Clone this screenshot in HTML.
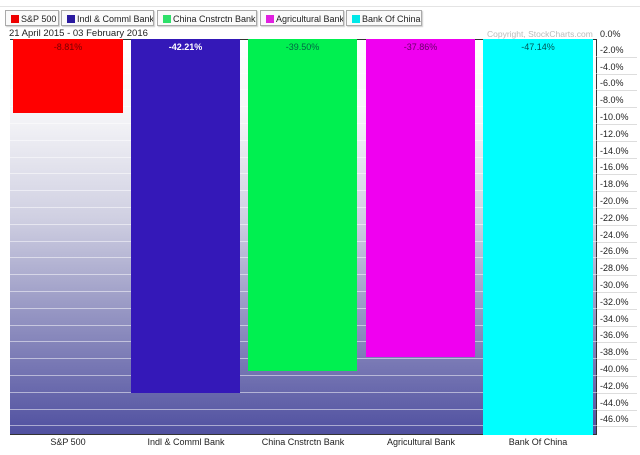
<!DOCTYPE html>
<html><head><style>
body{margin:0;width:640px;height:455px;background:#fff;position:relative;overflow:hidden;font-family:"Liberation Sans",sans-serif;font-size:9px;color:#222}
.a{position:absolute}
.lg{position:absolute;top:10px;height:16px;border:1px solid #aaa;background:#fafafa;box-shadow:1px 1px 1px #ccc;font-size:9px;line-height:16px;padding-left:15px;box-sizing:border-box;white-space:nowrap;overflow:hidden}
.lg i{position:absolute;left:5px;top:4px;width:8px;height:8px}
.bar{position:absolute;top:39px;text-align:center;font-size:9px;padding-top:3px;box-sizing:border-box}
.gl{position:absolute;left:10px;width:587px;height:1px;background:rgba(255,255,255,0.5)}
.yl{position:absolute;left:600px;font-size:9px}
.xl{position:absolute;top:437px;font-size:9px;text-align:center;width:110px;white-space:nowrap}
</style></head><body>
<div class="a" style="left:0;top:0;width:640px;height:6px;border-bottom:1px solid #e4e4e4"></div>
<div class="lg" style="left:5px;width:54px"><i style="background:#e00"></i>S&amp;P 500</div>
<div class="lg" style="left:61px;width:93px"><i style="background:#2a1aa0"></i>Indl &amp; Comml Bank</div>
<div class="lg" style="left:157px;width:100px"><i style="background:#2ee06a"></i>China Cnstrctn Bank</div>
<div class="lg" style="left:260px;width:84px"><i style="background:#e020e0"></i>Agricultural Bank</div>
<div class="lg" style="left:346px;width:76px"><i style="background:#00e8e8"></i>Bank Of China</div>
<div class="a" style="left:9px;top:28px;font-size:9.5px">21 April 2015 - 03 February 2016</div>
<div class="a" style="left:487px;top:29px;font-size:8.5px;color:#bbb">Copyright, StockCharts.com</div>
<div class="a" style="left:10px;top:39px;width:587px;height:396px;background:linear-gradient(#fff 0%,#f6f6f8 18%,#d0d0e2 45%,#9494c2 70%,#5050a0 100%);border-top:1px solid #333;border-bottom:1px solid #333;border-right:1px solid #333;box-sizing:border-box"></div>
<div id="g"></div>
<div class="bar" style="left:13px;width:110px;height:74px;background:#f00;color:#700">-8.81%</div>
<div class="bar" style="left:131px;width:109px;height:354px;background:#3418b8;color:#fff;font-weight:bold">-42.21%</div>
<div class="bar" style="left:248px;width:109px;height:332px;background:#00f050;color:#064">-39.50%</div>
<div class="bar" style="left:366px;width:109px;height:318px;background:#f000f0;color:#606">-37.86%</div>
<div class="bar" style="left:483px;width:110px;height:396px;background:#00ffff;color:#055">-47.14%</div>
<div class="xl" style="left:13px">S&amp;P 500</div>
<div class="xl" style="left:131px">Indl &amp; Comml Bank</div>
<div class="xl" style="left:248px">China Cnstrctn Bank</div>
<div class="xl" style="left:366px">Agricultural Bank</div>
<div class="xl" style="left:483px">Bank Of China</div>
<div class="yl" style="top:29px">0.0%</div>
<script>
var g='';
for(var i=1;i<=23;i++){var y=39+i*16.8;
g+='<div class="gl" style="top:'+Math.round(y)+'px"></div>';
g+='<div class="yl" style="top:'+Math.round(y-11)+'px">-'+(i*2)+'.0%</div>';
g+='<div class="a" style="left:597px;width:40px;height:1px;background:#ddd;top:'+Math.round(y+1)+'px"></div>';}
document.getElementById('g').innerHTML=g;
</script>
</body></html>
